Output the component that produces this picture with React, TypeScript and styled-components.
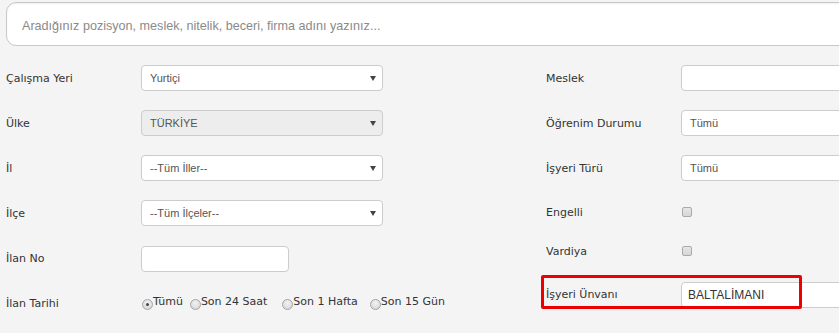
import { createGlobalStyle } from 'styled-components';
import styled from 'styled-components';

const GlobalStyle = createGlobalStyle`
  html, body {
    margin: 0;
    padding: 0;
    background: #f4f4f4;
    overflow: hidden;
  }
  body {
    font-family: 'DejaVu Sans', Verdana, sans-serif;
  }
`;

const Page = styled.div`
  width: 839px;
  height: 333px;
  overflow: hidden;
  background: #f4f4f4;
`;

const SearchBar = styled.div`
  margin: 2px 0 0 6px;
  width: 900px;
  height: 44px;
  box-sizing: border-box;
  background: #fff;
  border: 1px solid #c8c8c8;
  border-radius: 10px 0 0 10px;
  box-shadow: inset 0 1px 2px rgba(0, 0, 0, 0.06);
  display: flex;
  align-items: center;
  padding: 3px 0 0 13px;
`;

const SearchInput = styled.input`
  border: 0;
  outline: none;
  background: transparent;
  width: 100%;
  font-family: 'Liberation Sans', Arial, sans-serif;
  font-size: 12.6px;
  color: #333;
  &::placeholder {
    color: #8a8a8a;
  }
`;

const Form = styled.div`
  display: flex;
  gap: 163px;
  padding: 19px 0 0 6px;
`;

const Column = styled.div<{ $width?: number }>`
  display: flex;
  flex-direction: column;
  width: ${(p) => (p.$width ? `${p.$width}px` : 'auto')};
  flex-shrink: 0;
`;

const Row = styled.div<{ $h?: number; $mt?: number }>`
  display: flex;
  align-items: center;
  height: ${(p) => p.$h ?? 26}px;
  margin-top: ${(p) => p.$mt ?? 19}px;
  position: relative;
  &:first-child {
    margin-top: 0;
  }
`;

const Label = styled.label`
  width: 135px;
  flex-shrink: 0;
  font-size: 11px;
  color: #333;
  white-space: nowrap;
`;

const SelectBox = styled.div<{ $disabled?: boolean; $width?: number }>`
  position: relative;
  width: ${(p) => p.$width ?? 242}px;
  height: 26px;
  box-sizing: border-box;
  border: 1px solid #ccc;
  border-radius: 4px;
  background: ${(p) => (p.$disabled ? '#ededed' : '#fff')};
  font-family: 'Liberation Sans', Arial, sans-serif;
  font-size: 11px;
  color: #555;
  display: flex;
  align-items: center;
  padding-left: 8px;
  flex-shrink: 0;
`;

const Arrow = styled.span`
  position: absolute;
  right: 6px;
  top: 10px;
  width: 0;
  height: 0;
  border-left: 3px solid transparent;
  border-right: 3px solid transparent;
  border-top: 5px solid #444;
`;

const TextBox = styled.input<{ $width?: number; $big?: boolean }>`
  width: ${(p) => p.$width ?? 242}px;
  height: 26px;
  box-sizing: border-box;
  border: 1px solid #ccc;
  border-radius: 4px;
  background: #fff;
  padding: 0 0 0 6px;
  font-family: 'Liberation Sans', Arial, sans-serif;
  font-size: ${(p) => (p.$big ? 12 : 11)}px;
  color: #333;
  flex-shrink: 0;
  outline: none;
`;

const Check = styled.span`
  width: 10px;
  height: 10px;
  box-sizing: border-box;
  border: 1px solid #aaa;
  border-radius: 2px;
  background: linear-gradient(#e6e6e6, #d6d6d6);
  margin-left: 1px;
  margin-top: -1px;
`;

const RadioGroup = styled.div`
  display: flex;
  align-items: flex-end;
  flex-shrink: 0;
  margin-top: -4px;
`;

const RadioOption = styled.span<{ $gap: number }>`
  display: flex;
  align-items: flex-end;
  margin-right: ${(p) => p.$gap}px;
  font-size: 11px;
  color: #333;
  white-space: nowrap;
`;

const RadioDot = styled.span<{ $checked?: boolean }>`
  position: relative;
  width: 11px;
  height: 11px;
  box-sizing: border-box;
  border: 1px solid #a5a5a5;
  border-radius: 50%;
  background: radial-gradient(circle at 50% 35%, #f2f2f2, #d2d2d2);
  margin: 0 0 -2px 1px;
  &::after {
    content: '';
    display: ${(p) => (p.$checked ? 'block' : 'none')};
    position: absolute;
    left: 3px;
    top: 3px;
    width: 3px;
    height: 3px;
    border-radius: 50%;
    background: #444;
  }
`;

const Highlight = styled.div`
  position: absolute;
  left: -5px;
  top: -7px;
  width: 261px;
  height: 34px;
  box-sizing: border-box;
  border: 3px solid #ee0000;
  border-radius: 2px;
  pointer-events: none;
`;

const radios = [
  { label: 'Tümü', checked: true, gap: 6 },
  { label: 'Son 24 Saat', gap: 14 },
  { label: 'Son 1 Hafta', gap: 11 },
  { label: 'Son 15 Gün', gap: 0 },
];

export default function App() {
  return (
    <Page>
      <GlobalStyle />
      <SearchBar>
        <SearchInput placeholder="Aradığınız pozisyon, meslek, nitelik, beceri, firma adını yazınız..." />
      </SearchBar>
      <Form>
        <Column $width={377}>
          <Row>
            <Label>Çalışma Yeri</Label>
            <SelectBox>
              Yurtiçi
              <Arrow />
            </SelectBox>
          </Row>
          <Row>
            <Label>Ülke</Label>
            <SelectBox $disabled>
              TÜRKİYE
              <Arrow />
            </SelectBox>
          </Row>
          <Row>
            <Label>İl</Label>
            <SelectBox>
              --Tüm İller--
              <Arrow />
            </SelectBox>
          </Row>
          <Row>
            <Label>İlçe</Label>
            <SelectBox>
              --Tüm İlçeler--
              <Arrow />
            </SelectBox>
          </Row>
          <Row $h={27}>
            <Label>İlan No</Label>
            <TextBox $width={148} />
          </Row>
          <Row $mt={18}>
            <Label>İlan Tarihi</Label>
            <RadioGroup>
              {radios.map((r) => (
                <RadioOption key={r.label} $gap={r.gap}>
                  <RadioDot $checked={r.checked} />
                  {r.label}
                </RadioOption>
              ))}
            </RadioGroup>
          </Row>
        </Column>
        <Column>
          <Row>
            <Label>Meslek</Label>
            <TextBox />
          </Row>
          <Row>
            <Label>Öğrenim Durumu</Label>
            <SelectBox>Tümü</SelectBox>
          </Row>
          <Row>
            <Label>İşyeri Türü</Label>
            <SelectBox>Tümü</SelectBox>
          </Row>
          <Row $mt={18}>
            <Label>Engelli</Label>
            <Check />
          </Row>
          <Row $mt={13}>
            <Label>Vardiya</Label>
            <Check />
          </Row>
          <Row $mt={18} $h={25}>
            <Highlight />
            <Label>İşyeri Ünvanı</Label>
            <TextBox $big defaultValue="BALTALİMANI" />
          </Row>
        </Column>
      </Form>
    </Page>
  );
}
